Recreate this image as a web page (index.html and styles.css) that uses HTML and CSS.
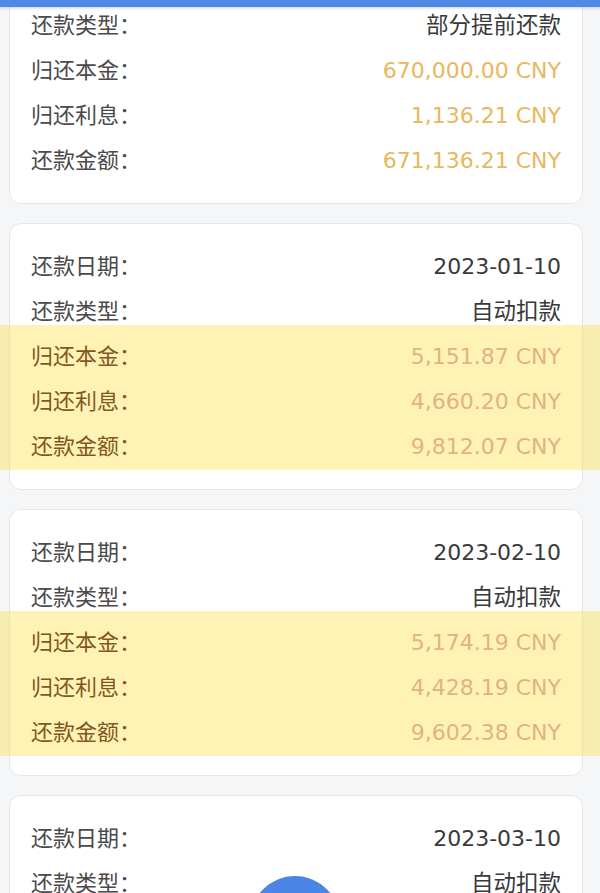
FILE: index.html
```html
<!DOCTYPE html>
<html lang="zh-CN">
  <head>
    <meta charset="UTF-8" />
    <meta name="viewport" content="width=device-width, initial-scale=1.0" />
    <title>还款记录</title>
    <link rel="stylesheet" href="styles.css">
  </head>
  <body>
    <div class="topbar"></div>
    <div class="list">
      <div class="card">
        <div class="row"><span class="label">还款类型：</span><span class="value cn">部分提前还款</span></div>
        <div class="row"><span class="label">归还本金：</span><span class="value money">670,000.00 CNY</span></div>
        <div class="row"><span class="label">归还利息：</span><span class="value money">1,136.21 CNY</span></div>
        <div class="row"><span class="label">还款金额：</span><span class="value money">671,136.21 CNY</span></div>
      </div>

      <div class="card">
        <div class="row"><span class="label">还款日期：</span><span class="value">2023-01-10</span></div>
        <div class="row"><span class="label">还款类型：</span><span class="value cn">自动扣款</span></div>
        <div class="hl">
          <div class="row"><span class="label">归还本金：</span><span class="value money">5,151.87 CNY</span></div>
          <div class="row"><span class="label">归还利息：</span><span class="value money">4,660.20 CNY</span></div>
          <div class="row"><span class="label">还款金额：</span><span class="value money">9,812.07 CNY</span></div>
        </div>
      </div>

      <div class="card">
        <div class="row"><span class="label">还款日期：</span><span class="value">2023-02-10</span></div>
        <div class="row"><span class="label">还款类型：</span><span class="value cn">自动扣款</span></div>
        <div class="hl">
          <div class="row"><span class="label">归还本金：</span><span class="value money">5,174.19 CNY</span></div>
          <div class="row"><span class="label">归还利息：</span><span class="value money">4,428.19 CNY</span></div>
          <div class="row"><span class="label">还款金额：</span><span class="value money">9,602.38 CNY</span></div>
        </div>
      </div>

      <div class="card">
        <div class="row"><span class="label">还款日期：</span><span class="value">2023-03-10</span></div>
        <div class="row"><span class="label">还款类型：</span><span class="value cn">自动扣款</span></div>
      </div>
    </div>
    <div class="fab"></div>
  </body>
</html>
```

FILE: styles.css
```css
body {
  margin: 0;
  background: #f5f6f7;
  font-family: "DejaVu Sans", "Noto Sans CJK SC", sans-serif;
  font-size: 22px;
  overflow: hidden;
}
.topbar {
  position: fixed;
  top: 0;
  left: 0;
  right: 0;
  height: 7px;
  background: #5089e3;
  box-shadow: 0 1px 3px rgba(80, 137, 227, 0.35);
  z-index: 2;
}
.list {
  margin-top: -18px;
  padding: 0 17px 0 9px;
  display: flex;
  flex-direction: column;
  gap: 19px;
}
.card {
  background: #fff;
  border: 1px solid #e6e7e9;
  border-radius: 12px;
  padding: 20px 21px;
}
.row {
  height: 45px;
  display: flex;
  align-items: center;
  justify-content: space-between;
}
.label {
  font-family: "Noto Sans CJK SC", sans-serif;
  color: #4a4a4a;
  margin-bottom: 6px;
}
.value {
  color: #3a3a3a;
}
.cn {
  font-size: 22.5px;
  margin-bottom: 6px;
}
.money {
  color: #e8b75e;
}
.hl {
  margin: -9px -39px -1px -31px;
  padding: 9px 39px 1px 31px;
  background: rgba(252, 226, 70, 0.4);
}
.hl .label {
  color: #83561f;
}
.hl .money {
  color: #e2b284;
}
.fab {
  position: fixed;
  left: 250px;
  top: 876px;
  width: 90px;
  height: 90px;
  border-radius: 50%;
  background: #4b86e6;
  box-shadow: 0 0 4px 2px rgba(255, 255, 255, 0.8);
}
```
